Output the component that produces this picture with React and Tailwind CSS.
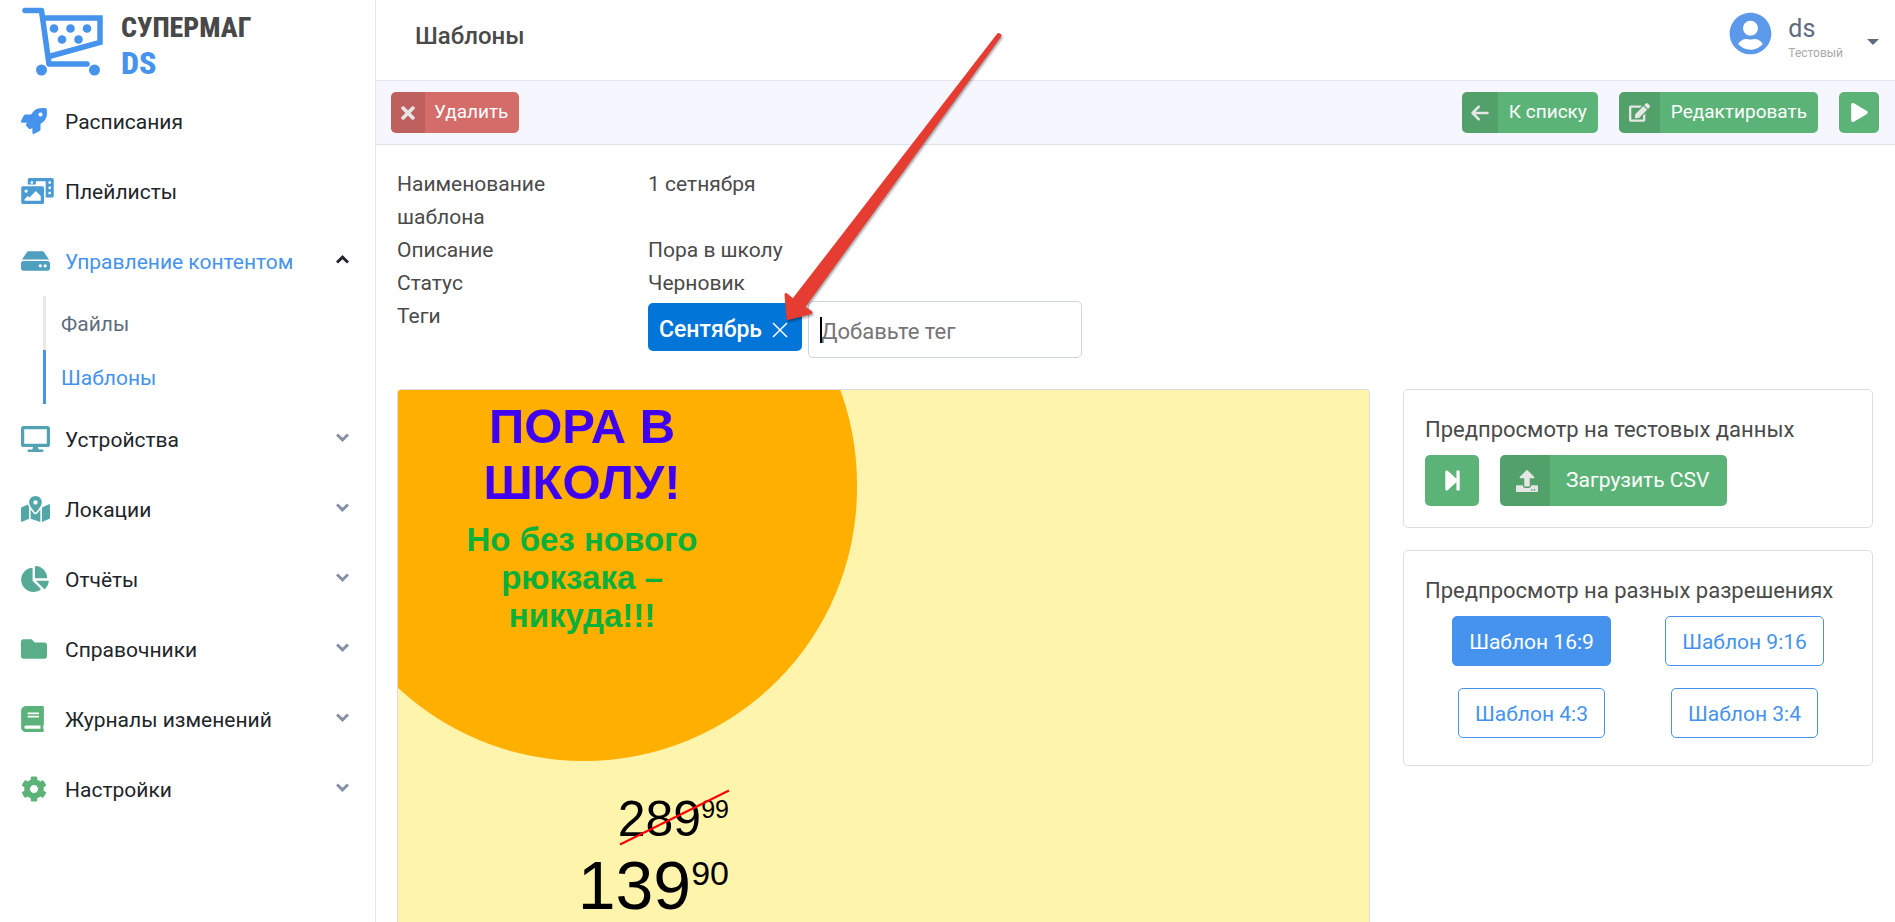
import { FaRocket, FaPhotoVideo, FaHdd, FaDesktop, FaMapMarkedAlt, FaChartPie, FaFolder, FaBook, FaCog, FaTimes, FaEdit, FaPlay, FaUpload, FaUserCircle, FaStepForward } from 'react-icons/fa';
import { FaArrowLeft } from 'react-icons/fa6';

const menuTop = [
  { label: 'Расписания', Icon: FaRocket, size: 'w-[26px]', tone: 'text-[#4593ed]' },
  { label: 'Плейлисты', Icon: FaPhotoVideo, size: 'w-[33px]', tone: 'text-[#4a9ad4]' },
];

const menuBottom = [
  { label: 'Устройства', Icon: FaDesktop, size: 'w-[29px]', tone: 'text-[#51a3b3]' },
  { label: 'Локации', Icon: FaMapMarkedAlt, size: 'w-[29px]', tone: 'text-[#53a6a8]' },
  { label: 'Отчёты', Icon: FaChartPie, size: 'w-7', tone: 'text-[#56aa98]' },
  { label: 'Справочники', Icon: FaFolder, size: 'w-[26px]', tone: 'text-[#59ae88]' },
  { label: 'Журналы изменений', Icon: FaBook, size: 'w-[23px]', tone: 'text-[#5bb27a]' },
  { label: 'Настройки', Icon: FaCog, size: 'w-[26px]', tone: 'text-[#5cb377]' },
];

function Logo() {
  return (
    <a href="#home" className="flex h-[86px] items-start gap-[18px] pl-[22px] pt-[7px]">
      <svg width="81" height="70" viewBox="0 0 81 70" fill="none" stroke="#4593ed" aria-hidden="true">
        <path d="M3 3.5H19.5L27 57H65" strokeWidth="5.5" strokeLinecap="round" strokeLinejoin="round" />
        <path d="M22 11H78V35.5L27 49.5" strokeWidth="5.5" />
        <g fill="#4593ed" stroke="none">
          <circle cx="32" cy="21.5" r="4.3" />
          <circle cx="48.5" cy="21.5" r="4.3" />
          <circle cx="65" cy="21.5" r="4.3" />
          <circle cx="40" cy="32.5" r="4.3" />
          <circle cx="56.5" cy="32.5" r="4.3" />
          <circle cx="19.5" cy="63" r="5.5" />
          <circle cx="72.5" cy="63" r="5.5" />
        </g>
      </svg>
      <span className="flex flex-col gap-[7px] pt-[7px] font-['Roboto_Condensed','Roboto',sans-serif] text-[28px] leading-7 font-extrabold text-[#484848]">
        <span className="uppercase">супермаг</span>
        <span className="text-[32px] text-[#4593ed]">DS</span>
      </span>
    </a>
  );
}

function Chevron({ up }) {
  return (
    <svg width="13" height="9" viewBox="0 0 13 9" fill="none" stroke="currentColor" strokeWidth="3" className="mb-1" aria-hidden="true">
      <path d={up ? 'M1 7.5L6.5 2.2L12 7.5' : 'M1 1.5L6.5 6.8L12 1.5'} />
    </svg>
  );
}

function MenuItem({ label, Icon, size, tone, collapsible, open }) {
  return (
    <a href="#section" className={`flex h-[70px] items-center pl-[21px] pr-[26px] ${open ? 'text-[#4593ed]' : 'text-[#212529]'}`}>
      <span className={`w-11 ${tone}`}><Icon className={`h-[26px] ${size}`} /></span>
      <span className="flex-1 pt-1">{label}</span>
      {collapsible && <span className={open ? 'text-[#212529]' : 'text-[#8791a5]'}><Chevron up={open} /></span>}
    </a>
  );
}

function Sidebar() {
  return (
    <aside className="w-[376px] shrink-0 border-r border-[#e3e6ec]">
      <Logo />
      <nav>
        <ul>
          {menuTop.map((item) => <li key={item.label}><MenuItem {...item} /></li>)}
          <li>
            <MenuItem label="Управление контентом" Icon={FaHdd} size="w-[29px]" tone="text-[#4f9fbf]" collapsible open />
            <ul className="ml-[43px]">
              <li><a href="#files" className="flex h-[54px] items-center border-l-[3px] border-[#e6e8ea] pl-[15px] pt-1 text-[#5f6b80]">Файлы</a></li>
              <li><a href="#templates" className="flex h-[54px] items-center border-l-[3px] border-[#4593ed] pl-[15px] pt-1 text-[#4593ed]">Шаблоны</a></li>
            </ul>
          </li>
          {menuBottom.map((item) => <li key={item.label}><MenuItem {...item} collapsible /></li>)}
        </ul>
      </nav>
    </aside>
  );
}

function Action({ icon, tone = 'bg-[#5cb377]', slot, body, children }) {
  return (
    <button type="button" className={`flex items-stretch overflow-hidden rounded-[5px] text-white ${tone} ${body}`}>
      <span className={`flex items-center justify-center bg-black/10 text-[#e6e6e6] ${slot}`}>{icon}</span>
      <span className="flex items-center">{children}</span>
    </button>
  );
}

const small = 'h-[41px] pr-[11px] text-[19px]';

function Row({ term, children }) {
  return (
    <div className="flex">
      <dt className="w-[251px] shrink-0 pr-16">{term}</dt>
      <dd>{children}</dd>
    </div>
  );
}

function Preview() {
  return (
    <section className="relative aspect-video min-w-0 flex-1 self-start overflow-hidden rounded-[4px] border border-[#dcdcdc] bg-[#fff4ac] font-['Liberation_Sans',sans-serif]">
      <div className="absolute -left-[87px] -top-[179px] h-[550px] w-[546px] rounded-full bg-[#ffaf00]" />
      <div className="absolute left-16 top-2 w-60 text-center font-bold">
        <p className="mx-auto w-52 text-[49px] leading-[56px] text-[#3f00f2]">ПОРА В ШКОЛУ!</p>
        <p className="pt-[11px] text-[33px] leading-[38px] text-[#08b13a]">Но без нового рюкзака – никуда!!!</p>
      </div>
      <div className="absolute left-[120px] top-[393px] w-[211px] text-black">
        <p className="flex justify-end text-[50px] leading-[72px]">289<span className="text-[25px] leading-[52px]">99</span></p>
        <p className="flex justify-end text-[68px] leading-[60px]">139<span className="text-[34px] leading-9">90</span></p>
      </div>
      <svg className="absolute left-[221px] top-[399px]" width="111" height="58" aria-hidden="true">
        <path d="M1 55.5L110 1.5" stroke="#ff0000" strokeWidth="2" />
      </svg>
    </section>
  );
}

function Panel({ title, children }) {
  return (
    <section className="rounded-[5px] border border-[#dedede] px-[21px] pt-[23px] pb-[21px]">
      <h2 className="mb-[9px] text-[22px] leading-[33px] whitespace-nowrap">{title}</h2>
      {children}
    </section>
  );
}

const ratio = 'h-[50px] rounded-[5px] border border-[#4593ed] px-4 pt-[3px]';

export default function App() {
  return (
    <div className="relative flex h-screen overflow-hidden bg-white font-['Roboto',sans-serif] text-[21px] text-[#4a4a4a]">
      <Sidebar />
      <div className="min-w-0 flex-1">
        <header className="flex h-[81px] items-start justify-between border-b border-[#e3e6ec] pl-[39px] pr-4">
          <h1 className="pt-[22px] text-[24px] leading-7 font-medium">Шаблоны</h1>
          <button type="button" className="flex items-start pt-3 text-left">
            <FaUserCircle size={43} className="mr-4 text-[#5c99ea]" />
            <span className="mr-6 flex flex-col">
              <span className="text-[25px] leading-[34px] text-[#5f6b80]">ds</span>
              <span className="text-[12px] leading-[14px] text-[#a9a9a9]">Тестовый</span>
            </span>
            <svg width="12" height="6" viewBox="0 0 12 6" className="mt-[27px] text-[#5f6b80]" fill="currentColor" aria-hidden="true"><path d="M0 0H12L6 6Z" /></svg>
          </button>
        </header>
        <div className="flex h-16 items-center justify-between border-b border-[#dee2e8] bg-[#f6f6ff] pl-[15px] pr-4">
          <Action icon={<FaTimes size={20} />} slot="mr-[9px] w-[34px]" tone="bg-[#d46c69]" body={small}>Удалить</Action>
          <div className="flex gap-[21px]">
            <Action icon={<FaArrowLeft size={20} />} slot="mr-[11px] w-9" body={small}>К списку</Action>
            <Action icon={<FaEdit className="h-[19px] w-[21px]" />} slot="mr-[11px] w-[41px]" body={small}>Редактировать</Action>
            <button type="button" aria-label="Запустить" className="flex h-[41px] w-10 items-center justify-center rounded-[5px] bg-[#5cb377] text-white"><FaPlay size={19} /></button>
          </div>
        </div>
        <main className="pt-[23px] pr-[22px] pl-[21px]">
          <dl className="leading-[33px]">
            <Row term="Наименование шаблона">1 сетнября</Row>
            <Row term="Описание">Пора в школу</Row>
            <Row term="Статус">Черновик</Row>
            <Row term="Теги">
              <div className="flex items-start gap-[6px] text-[22px]">
                <span className="mt-[3px] flex h-12 items-center gap-[10px] rounded-[5px] bg-[#0275d8] pt-[5px] pr-[14px] pl-[11px] text-[23px] font-medium text-white">
                  Сентябрь
                  <button type="button" aria-label="Удалить тег"><svg width="16" height="16" viewBox="0 0 16 16" stroke="currentColor" strokeWidth="1.5" aria-hidden="true"><path d="M1 1L15 15M15 1L1 15" /></svg></button>
                </span>
                <span className="relative mt-px flex">
                  <input aria-label="Добавьте тег" placeholder="Добавьте тег" className="h-[57px] w-[274px] rounded-[5px] border border-[#ced4da] px-3 pt-1 outline-none placeholder:text-[#757575]" />
                  <span className="absolute top-4 left-3 h-[26px] w-[2px] bg-black" />
                </span>
              </div>
            </Row>
          </dl>
          <div className="mt-[31px] flex items-start gap-[33px]">
            <Preview />
            <div className="flex w-[470px] shrink-0 flex-col gap-[22px]">
              <Panel title="Предпросмотр на тестовых данных">
                <div className="flex gap-[21px]">
                  <button type="button" aria-label="Следующий" className="flex h-[51px] w-[54px] items-center justify-center rounded-[5px] bg-[#5cb377] text-white"><FaStepForward size={23} /></button>
                  <Action icon={<FaUpload size={22} />} slot="mr-4 w-[50px] pl-1" body="h-[51px] pr-[18px] text-[21px]">Загрузить CSV</Action>
                </div>
              </Panel>
              <Panel title="Предпросмотр на разных разрешениях">
                <div className="grid grid-cols-2 justify-items-center gap-y-[22px] pb-[6px]">
                  <button type="button" className={`${ratio} bg-[#4593ed] text-white`}>Шаблон 16:9</button>
                  <button type="button" className={`${ratio} text-[#4593ed]`}>Шаблон 9:16</button>
                  <button type="button" className={`${ratio} text-[#4593ed]`}>Шаблон 4:3</button>
                  <button type="button" className={`${ratio} text-[#4593ed]`}>Шаблон 3:4</button>
                </div>
              </Panel>
            </div>
          </div>
        </main>
      </div>
      <svg className="pointer-events-none absolute top-[25px] left-[780px] drop-shadow-[1px_2px_1px_rgba(0,0,0,0.35)]" width="230" height="305" viewBox="780 25 230 305" aria-hidden="true">
        <path d="M998.5 34.5L793 300.5L786 294.5L788 318.5L811 312.5L803.5 307L1000 35.5Z" fill="#e63c31" stroke="#e63c31" strokeWidth="3" strokeLinejoin="round" />
      </svg>
    </div>
  );
}
